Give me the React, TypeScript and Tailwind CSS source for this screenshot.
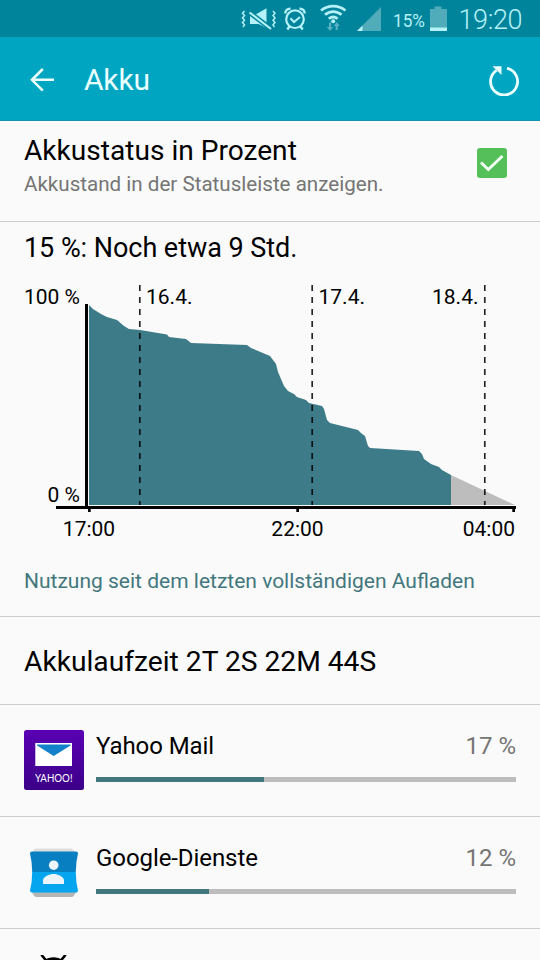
import { useState } from "react";
import type { ReactNode } from "react";

type AppUsage = {
  name: string;
  percent: number;
  // bar width relative to the full track
  fill: number;
  icon: ReactNode;
};

const LEVELS =
  "89,305 93,309 101,314 107,317 117,320 124,326 129,329 140,330 167,334.5 169,337 186,339 191,343 247,345 251,348 270,356 276,364 278,372 284,386 288,391 294,394 297,397 306,400 309,403 322,406 324,409 327,420 330,423 358,430 361,433 365,436 368,446 370,448 419,451 422,454 424,459 431,464 439,467 442,470 451,475";

const DAY_LINES = [139.8, 312.2, 484.8];
const TICKS = [88, 296.3, 512.3];

function StatusBar() {
  return (
    <div className="flex h-[37px] items-center bg-[#00849b] text-[#b4f1f8]">
      <svg width="540" height="37" viewBox="0 0 540 37" className="block shrink-0" fontFamily="Roboto, sans-serif">
        {/* muted, vibrating */}
        <g fill="none" stroke="currentColor" strokeWidth="1.5">
          <path d="M244.500 11l-2 2.300 2 2.300-2 2.300 2 2.300-2 2.300 2 2.300-1.500 2.200" />
          <path d="M273 11l2 2.300-2 2.300 2 2.300-2 2.300 2 2.300-2 2.300 1.500 2.200" />
        </g>
        <path d="M250 14h6.500l10-5.800V28l-8-4H250z" fill="currentColor" />
        <path d="M249 12.200l22.500 17" stroke="#00849b" strokeWidth="5" />
        <path d="M249.500 12.500l21.500 16.500" stroke="currentColor" strokeWidth="2.200" />

        {/* alarm */}
        <g fill="none" stroke="currentColor">
          <circle cx="295" cy="19.200" r="8.800" strokeWidth="2.200" />
          <path d="M290.500 18.200l3.500 3.800 6-5" strokeWidth="2" />
          <path d="M285.300 13.500c0-3 2-5 5.200-4.800M304.700 13.500c0-3-2-5-5.200-4.800M289.500 26.500l-2.200 3M300.500 26.500l2.200 3" strokeWidth="2.400" />
        </g>

        {/* wifi with traffic arrows */}
        <g fill="none" stroke="currentColor" strokeWidth="2.700">
          <path d="M321 10.500c7.500-5.800 17-5.800 24.500 0" />
          <path d="M325 14.800c5-4.300 11.500-4.300 16.500 0" />
          <path d="M328.800 18.800c2.800-2.300 6-2.300 8.800 0" />
        </g>
        <circle cx="333.200" cy="21.200" r="2" fill="currentColor" />
        <path d="M329 22.500h2.200v4.500h2L330 31l-3.200-4H329zM335.600 30h2.200v-4h2L336.700 22l-3.100 4h2z" fill="#58b1c0" />

        {/* signal */}
        <path d="M357 31L381 7v24z" fill="#50acba" />
        <path d="M357 31l5.500-5.500V31z" fill="currentColor" />

        <text x="393" y="26.500" fontSize="17.500" textLength="32" lengthAdjust="spacingAndGlyphs" fill="currentColor">15%</text>

        {/* battery */}
        <path d="M430 9h4.500V6.500h7V9h5.500v22h-17z" fill="#50acba" />
        <path d="M430 27.500h17V31h-17z" fill="currentColor" />

        <text x="458.500" y="29" fontSize="27" textLength="64" fontWeight="300" fill="currentColor">19:20</text>
      </svg>
    </div>
  );
}

function AppBar() {
  return (
    <header className="flex h-[84px] items-center border-b border-[#1595aa] bg-[#00a6c1] pr-5 pl-[29px] text-[#eaffff]">
      <svg width="26" height="26" viewBox="0 0 26 26" fill="none" stroke="currentColor" strokeWidth="2.600">
        <path d="M13.800 3L3 13.800l10.800 10.800M2.500 13.800H25" />
      </svg>
      <h1 className="ml-[29px] pt-[3px] text-[30px] leading-none tracking-[-0.2px]">Akku</h1>
      <svg className="ml-auto" width="32" height="34" viewBox="0 0 32 34" fill="none">
        <path d="M19 6.300A13.500 13.500 0 1 1 8.500 8.300" stroke="currentColor" strokeWidth="2.800" />
        <path d="M4.500 4.300H13.500V13z" fill="currentColor" />
      </svg>
    </header>
  );
}

function BatteryChart() {
  return (
    <svg
      width="540"
      height="275"
      viewBox="0 275 540 275"
      className="block"
      fontFamily="Roboto, sans-serif"
      fontSize="21"
    >
      <polygon points={`89,505 ${LEVELS} 451,505`} fill="#3d7b88" />
      <polygon points="451,475 515,505 451,505" fill="#bdbdbd" />

      {DAY_LINES.map((x) => (
        <line key={x} x1={x} x2={x} y1="285" y2="505" stroke="#000" strokeOpacity="0.85" strokeWidth="1.700" strokeDasharray="6 6" />
      ))}

      <rect x="85" y="304" width="3" height="203" />
      <rect x="56" y="506" width="460" height="3" />
      {TICKS.map((x) => (
        <rect key={x} x={x} y="508" width="2.700" height="4" />
      ))}

      <text x="80" y="304" textAnchor="end">100 %</text>
      <text x="80" y="502" textAnchor="end">0 %</text>
      <text x="146" y="304">16.4.</text>
      <text x="318.500" y="304">17.4.</text>
      <text x="478.500" y="304" textAnchor="end">18.4.</text>
      <text x="89" y="536" textAnchor="middle">17:00</text>
      <text x="297.500" y="536" textAnchor="middle">22:00</text>
      <text x="515" y="536" textAnchor="end">04:00</text>
    </svg>
  );
}

function YahooIcon() {
  return (
    <svg width="60" height="60" viewBox="0 0 60 60">
      <defs>
        <linearGradient id="yahoo" x2="0" y2="1">
          <stop stopColor="#5a00b4" />
          <stop offset="1" stopColor="#3c0088" />
        </linearGradient>
      </defs>
      <rect width="60" height="60" rx="2.500" fill="url(#yahoo)" />
      <rect x="11.300" y="13" width="36.700" height="23" fill="#fff" />
      <path d="M13 14.500h33.500v1L29.700 26 13 15.500z" fill="#1482cb" />
      <text x="11" y="51.800" fontSize="11.500" textLength="37.500" lengthAdjust="spacingAndGlyphs" fontFamily="Lato, sans-serif" fill="#fff">
        YAHOO!
      </text>
    </svg>
  );
}

function GoogleIcon() {
  return (
    <svg width="60" height="60" viewBox="0 0 60 60">
      <path d="M11 6.500h37l3 4H8z" fill="#dedede" />
      <path d="M7 49h46l-3 4.500q-1 1.500-3 1.500H13q-2 0-3-1.500z" fill="#b5b5b5" />
      <path d="M6 11.500Q6 9.500 8 9.500h44q2 0 2 2Q51.800 20 51.800 30H8.200Q8.200 20 6 11.500z" fill="#087fc1" />
      <path d="M8.200 30h43.600Q51.800 40 54 48.500q0 2-2 2H8q-2 0-2-2Q8.200 40 8.200 30z" fill="#05a6ef" />
      <circle cx="29.700" cy="23.200" r="4.800" fill="#edf5fa" />
      <path d="M19 42v-3.500c0-4 6.500-6.500 10.500-6.500S40 34.500 40 38.500V42z" fill="#edf5fa" />
    </svg>
  );
}

function AndroidIcon() {
  return (
    <svg width="60" height="60" viewBox="0 0 60 60">
      <path d="M18 0.500l4.500 5.500M41 0.500l-4.500 5.500" stroke="#000" strokeWidth="2.600" strokeLinecap="round" />
      <path d="M16 16C16 7 22 2.200 29.500 2.200S43 7 43 16z" />
    </svg>
  );
}

const APPS: AppUsage[] = [
  { name: "Yahoo Mail", percent: 17, fill: 40, icon: <YahooIcon /> },
  { name: "Google-Dienste", percent: 12, fill: 26.9, icon: <GoogleIcon /> },
];

function UsageRow({ app }: { app: AppUsage }) {
  return (
    <div className="flex h-28 border-b border-[#cdcdcd] px-6 pt-[25px]">
      {app.icon}
      <div className="ml-3 flex-1">
        <div className="flex h-8 items-center justify-between">
          <span className="text-[24px] tracking-[-0.08px] text-black">{app.name}</span>
          <span className="text-[24px] text-[#757575]">{app.percent} %</span>
        </div>
        <div className="mt-[15px] h-[5px] bg-[#bdbdbd]">
          <div className="h-full bg-[#42777d]" style={{ width: `${app.fill}%` }} />
        </div>
      </div>
    </div>
  );
}

export default function App() {
  const [showPercent, setShowPercent] = useState(true);

  return (
    <div className="h-[960px] w-[540px] overflow-hidden bg-[#fafafa] font-[Roboto,sans-serif] text-black">
      <StatusBar />
      <AppBar />

      <div className="flex h-[101px] justify-between border-b border-[#cdcdcd] pr-[33px] pl-6">
        <div className="pt-3">
          <div className="text-[28.1px] leading-9">Akkustatus in Prozent</div>
          <div className="text-[20.6px] leading-[30px] text-[#757575]">Akkustand in der Statusleiste anzeigen.</div>
        </div>
        <button
          type="button"
          onClick={() => setShowPercent(!showPercent)}
          className="mt-[27px] h-[30px] w-[30px] rounded-[3px] bg-[#55c05a]"
        >
          {showPercent && (
            <svg width="30" height="30" viewBox="0 0 30 30" fill="none" stroke="#f2fff2" strokeWidth="3">
              <path d="M4 14.500l7.300 7L25.500 8" />
            </svg>
          )}
        </button>
      </div>

      <div className="h-[395px] border-b border-[#cdcdcd]">
        <div className="h-[53px] px-6 pt-2 text-[27px] leading-9 tracking-[-0.05px]">15 %: Noch etwa 9 Std.</div>
        <BatteryChart />
        <div className="px-6 pt-4 text-[21px] leading-[30px] text-[#42777d]">
          Nutzung seit dem letzten vollständigen Aufladen
        </div>
      </div>

      <div className="flex h-[88px] items-center border-b border-[#cdcdcd] px-6 pt-[3px] text-[28.2px]">
        Akkulaufzeit 2T 2S 22M 44S
      </div>

      {APPS.map((app) => (
        <UsageRow key={app.name} app={app} />
      ))}
      <div className="px-6 pt-[26px]">
        <AndroidIcon />
      </div>
    </div>
  );
}
